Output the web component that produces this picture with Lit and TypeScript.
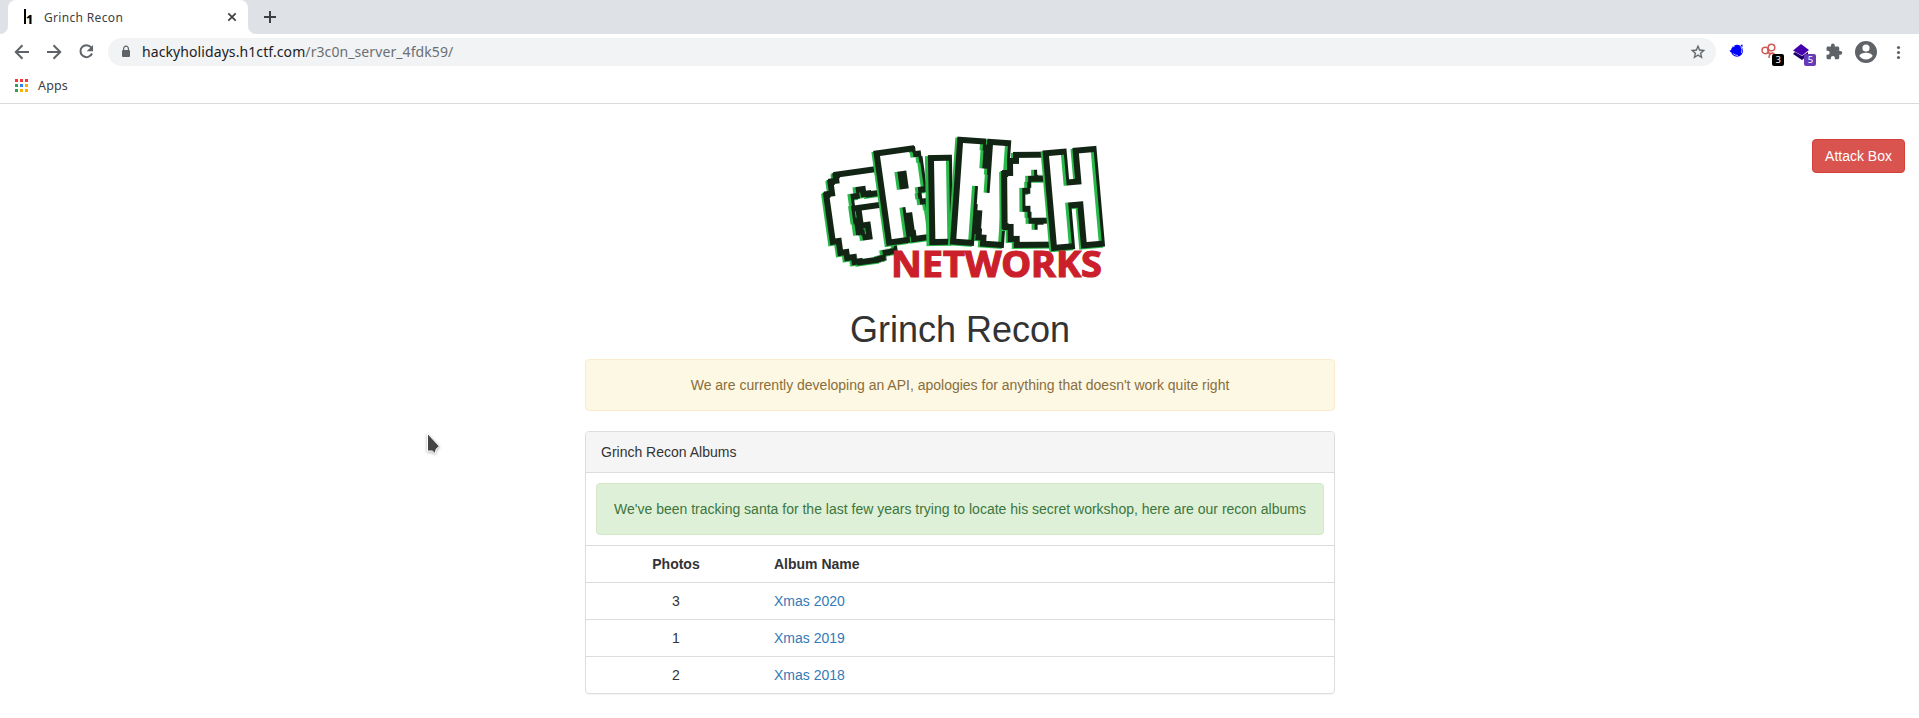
import { LitElement, html, svg, css } from "lit";
import { customElement, property } from "lit/decorators.js";

@customElement("browser-bar")
class BrowserBar extends LitElement {
  static styles = css`
    :host { display: block; font-family: "Noto Sans", sans-serif; color: #3c4043; }
    svg { display: block; flex: none; }
    .strip { display: flex; height: 34px; background: #dee1e6; }
    .curve { width: 8px; align-self: flex-end; height: 8px; background: radial-gradient(circle at 0 0, #dee1e6 7.5px, #fff 8.5px); }
    .curve.right { background: radial-gradient(circle at 100% 0, #dee1e6 7.5px, #fff 8.5px); }
    .tab { box-sizing: border-box; width: 240px; background: #fff; border-radius: 8px 8px 0 0; display: flex; align-items: center; padding: 0 10px 0 14px; font-size: 12px; line-height: 34px; }
    .title { flex: 1; margin-left: 6px; letter-spacing: 0.33px; padding-top: 1px; }
    .favicon { overflow: visible; }
    .plus { margin: 10px 0 0 7px; }
    .bar { box-sizing: border-box; height: 36px; padding: 4px 5px 4px 11px; display: flex; align-items: center; background: #fff; }
    .nav { display: flex; gap: 10px; width: 97px; }
    .pill { box-sizing: border-box; flex: none; width: 1608px; height: 28px; border-radius: 14px; background: #f1f3f4; display: flex; align-items: center; padding: 0 8px; font-size: 14px; }
    .lock { margin-right: 6px; }
    .url { flex: 1; color: #202124; line-height: 28px; letter-spacing: 0.09px; }
    .path { color: #6b6f73; }
    .exts { flex: 1; display: grid; grid-template-columns: repeat(6, 1fr); justify-items: center; align-items: center; margin-left: 5px; }
    .ext { position: relative; width: 22px; height: 28px; display: grid; place-items: start center; }
    .badge { position: absolute; right: -4px; bottom: 0; width: 12px; height: 12px; border-radius: 2px; background: #000; color: #fff; font-size: 9.5px; line-height: 12px; text-align: center; }
    .badge.violet { background: #673ab7; }
    .marks { display: flex; align-items: center; gap: 10px; height: 33px; padding-left: 15px; border-bottom: 1px solid #d8dadd; font-size: 12.5px; background: #fff; }
    .apps { line-height: 17px; margin-top: -2px; letter-spacing: 0.15px; }
    .grid { margin-top: -2px; }
  `;
  render() {
    const dots = ["#f13a35", "#f13a35", "#f13a35", "#34a053", "#2a86f4", "#f9ab00", "#34a053", "#fbb004", "#fbb004"];
    return html`
      <div class="strip">
        <div class="curve"></div>
        <div class="tab">
          <svg class="favicon" width="16" height="16" viewBox="0 0 16 16"><rect x="2" y="0" width="2" height="15" /><text x="4" y="14.800" font-family="Noto Sans" font-weight="800" font-size="12.500">1</text></svg>
          <span class="title">Grinch Recon</span>
          <svg width="12" height="12" viewBox="0 0 12 12"><path d="M2.3 2.3l7.4 7.4M9.7 2.3L2.3 9.7" stroke="#3c4043" stroke-width="1.7" /></svg>
        </div>
        <div class="curve right"></div>
        <svg class="plus" width="14" height="14" viewBox="0 0 14 14"><path d="M7 1v12M1 7h12" stroke="#3c4043" stroke-width="2" /></svg>
      </div>
      <div class="bar">
        <div class="nav">
          <svg width="22" height="22" viewBox="0 0 22 22" fill="none" stroke="#5f6368" stroke-width="2"><path d="M18 11H5.5M11.5 4.3L4.8 11l6.7 6.7" /></svg>
          <svg width="22" height="22" viewBox="0 0 22 22" fill="none" stroke="#5f6368" stroke-width="2"><path d="M4 11h12.5M10.5 4.3l6.7 6.7-6.7 6.7" /></svg>
          <svg width="22" height="22" viewBox="0 0 22 22"><path d="M16.1 6.3A6 6 0 1 0 17 12.5" fill="none" stroke="#5f6368" stroke-width="2" /><path d="M18 4v6.3h-6.3z" fill="#5f6368" /></svg>
        </div>
        <div class="pill">
          <svg class="lock" width="20" height="20" viewBox="0 0 20 20"><rect x="6" y="8" width="8" height="7" rx="1" fill="#5f6368" /><path d="M7.600 8V6.600a2.400 2.400 0 0 1 4.800 0V8" fill="none" stroke="#5f6368" stroke-width="1.200" /></svg>
          <span class="url">hackyholidays.h1ctf.com<span class="path">/r3c0n_server_4fdk59/</span></span>
          <svg width="20" height="20" viewBox="0 0 28 28"><path transform="translate(2 2)" fill="#5f6368" stroke="#5f6368" stroke-width=".3" d="M22 9.240l-7.190-.62L12 2 9.190 8.630 2 9.240l5.460 4.730L5.820 21 12 17.270 18.180 21l-1.630-7.030L22 9.240zM12 15.400l-3.760 2.270 1-4.280-3.320-2.880 4.380-.38L12 6.100l1.710 4.040 4.380.38-3.320 2.880 1 4.280L12 15.400z" /></svg>
        </div>
        <div class="exts">
          <div class="ext"><svg width="16" height="24" viewBox="0 0 16 24"><circle cx="8" cy="12.700" r="6" fill="#00f" /><path fill="#00f" d="M.5 12.300h3v2H1.500zM11.500 7l2-.5v3z" /><path d="M3.500 9l2.500-1.200M11.800 8.500q2.200 3 .5 6.500M4 15.500q2 2 5 2" stroke="#dfe4ff" fill="none" stroke-width=".8" /></svg></div>
          <div class="ext"><svg width="16" height="24" viewBox="0 0 16 24" fill="none" stroke="#cf5955" stroke-width="1.500"><circle cx="4.200" cy="12.500" r="3.200" /><circle cx="10.500" cy="9.500" r="3.300" /><path d="M6.500 10.500l1.500 5 4-.5 2.500 2M8 20q0-4 3-5" /></svg><span class="badge">3</span></div>
          <div class="ext"><svg width="16" height="24" viewBox="0 0 16 24"><path fill="#1e006e" d="M0 16l2-2 7 4 6-4v3l-6 5z" /><path fill="#4500ad" d="M8 6l8 6-7 5.500-9-5z" /></svg><span class="badge violet">5</span></div>
          <div class="ext"><svg width="18" height="28" viewBox="0 -6 24 37"><path fill="#5f6368" d="M20.500 11H19V7c0-1.100-.9-2-2-2h-4V3.500a2.500 2.500 0 0 0-5 0V5H4c-1.100 0-2 .9-2 2v3.800h1.500a2.700 2.700 0 0 1 0 5.400H2V20c0 1.100.9 2 2 2h3.800v-1.500a2.700 2.700 0 0 1 5.400 0V22H17c1.100 0 2-.9 2-2v-4h1.500a2.500 2.500 0 0 0 0-5z" /></svg></div>
          <svg width="22" height="22" viewBox="1 1 22 22"><path fill="#5f6368" d="M12 1a11 11 0 1 0 0 22 11 11 0 0 0 0-22zm0 3.400a3.600 3.600 0 1 1 0 7.200 3.600 3.600 0 0 1 0-7.200zM12 19.600a8 8 0 0 1-6.600-3.500c0-2.200 4.400-3.400 6.600-3.400s6.600 1.200 6.600 3.400A8 8 0 0 1 12 19.600z" /></svg>
          <svg width="22" height="22" viewBox="0 0 22 22" fill="#5f6368"><circle cx="11.500" cy="6.500" r="1.600" /><circle cx="11.500" cy="11.500" r="1.600" /><circle cx="11.500" cy="16.500" r="1.600" /></svg>
        </div>
      </div>
      <div class="marks">
        <svg class="grid" width="13" height="13" viewBox="0 0 13 13">${dots.map((c, i) => svg`<rect x=${(i % 3) * 5} y=${Math.floor(i / 3) * 5} width="3" height="3" fill=${c} />`)}</svg>
        <span class="apps">Apps</span>
      </div>`;
  }
}

interface Block { ch: string; x: number; y: number; w: number; h: number; rot: number; left: number; ink: number }

@customElement("grinch-logo")
class GrinchLogo extends LitElement {
  static styles = css`
    :host { display: block; }
    svg { display: block; overflow: visible; }
    .letter { font-family: "DejaVu Sans"; font-weight: 700; fill: #fff; }
    .networks { font-family: "Noto Sans", sans-serif; font-weight: 700; font-size: 36.5px; fill: #cb1f2b; stroke: #cb1f2b; stroke-width: 1.2px; }
  `;
  // left / ink: side bearing and drawn width of the glyph, in em
  blocks: Block[] = [
    { ch: "G", x: 827, y: 179, w: 52, h: 80, rot: -8, left: 0.05, ink: 0.697 },
    { ch: "R", x: 880, y: 156, w: 42, h: 86, rot: -8, left: 0.092, ink: 0.678 },
    { ch: "I", x: 934, y: 161, w: 14, h: 80, rot: -1, left: 0.092, ink: 0.188 },
    { ch: "N", x: 963, y: 143, w: 43, h: 94, rot: 4, left: 0.092, ink: 0.653 },
    { ch: "C", x: 1007, y: 158, w: 42, h: 84, rot: -0.5, left: 0.05, ink: 0.62 },
    { ch: "H", x: 1049, y: 156, w: 43, h: 87, rot: -5, left: 0.092, ink: 0.653 },
  ];
  render() {
    return html`<svg width="300" height="165" viewBox="810 120 300 165">
      <filter id="pix" filterUnits="userSpaceOnUse" primitiveUnits="userSpaceOnUse" x="-12" y="-12" width="84" height="132" color-interpolation-filters="sRGB">
        <feFlood x="-10" y="-10" width="2" height="2" flood-color="#fff" result="dot" />
        <feOffset in="dot" dx="0" dy="0" x="-12" y="-12" width="6" height="6" />
        <feTile x="-12" y="-12" width="84" height="132" result="grid" />
        <feComposite in="SourceGraphic" in2="grid" operator="in" />
        <feComponentTransfer><feFuncA type="linear" slope="12" intercept="-5" /></feComponentTransfer>
        <feMorphology operator="dilate" radius="2" result="white" />
        <feMorphology in="white" operator="dilate" radius="6" />
        <feColorMatrix values="0 0 0 0 .07 0 0 0 0 .14 0 0 0 0 .08 0 0 0 1 0" result="dark" />
        <feOffset in="dark" dx="-2.5" dy="1" />
        <feColorMatrix values="0 0 0 0 .16 0 0 0 0 .72 0 0 0 0 .29 0 0 0 1 0" result="green" />
        <feOffset in="white" dx="2.5" dy="0" />
        <feColorMatrix values="0 0 0 0 .16 0 0 0 0 .72 0 0 0 0 .29 0 0 0 1 0" result="edge" />
        <feMerge><feMergeNode in="green" /><feMergeNode in="dark" /><feMergeNode in="edge" /><feMergeNode in="white" /></feMerge>
      </filter>
      ${this.blocks.map((b) => {
        const size = b.h / 0.729;
        const sx = b.w / (b.ink * size);
        return svg`<g transform="translate(${b.x} ${b.y}) rotate(${b.rot})"><g filter="url(#pix)"><text class="letter" font-size=${size} transform="translate(${-b.left * size * sx} ${b.h}) scale(${sx} 1)">${b.ch}</text></g></g>`;
      })}
      <text class="networks" x="891" y="277" textLength="211" lengthAdjust="spacingAndGlyphs">NETWORKS</text>
    </svg>`;
  }
}

@customElement("app-root")
class AppRoot extends LitElement {
  @property({ attribute: false }) albums = [
    { photos: 3, name: "Xmas 2020" },
    { photos: 1, name: "Xmas 2019" },
    { photos: 2, name: "Xmas 2018" },
  ];
  static styles = css`
    :host { display: block; height: 718px; overflow: hidden; background: #fff; position: relative; font: 14px/20px "Liberation Sans", Arial, sans-serif; color: #333; }
    .page { display: grid; grid-template-columns: 585px 750px 1fr; }
    .main { grid-column: 2; padding-top: 16px; }
    grinch-logo { width: 300px; margin: 0 auto; }
    h1 { font-size: 36px; font-weight: 500; line-height: 39.6px; text-align: center; margin: 25px 0 9.400px; }
    .alert { box-sizing: border-box; height: 52px; padding: 15px; border: 1px solid #faebcc; border-radius: 4px; background: #fcf8e3; color: #8a6d3b; text-align: center; }
    .alert.ok { margin: 10px; border-color: #d6e9c6; background: #dff0d8; color: #3c763d; white-space: nowrap; }
    .panel { margin-top: 20px; border: 1px solid #ddd; border-radius: 4px; box-shadow: 0 1px 1px rgba(0, 0, 0, 0.05); }
    .heading { padding: 10px 15px; border-bottom: 1px solid #ddd; background: #f5f5f5; border-radius: 3px 3px 0 0; }
    .row { display: grid; grid-template-columns: 180px 1fr; border-top: 1px solid #ddd; }
    .row > * { padding: 8px; }
    .row > :first-child { text-align: center; }
    .head { font-weight: 700; }
    a { color: #337ab7; text-decoration: none; }
    .side { display: flex; justify-content: flex-end; align-items: flex-start; padding: 35px 14px 0 0; }
    .btn { font: inherit; box-sizing: border-box; height: 34px; padding: 6px 12px; border: 1px solid #d43f3a; border-radius: 4px; background: #d9534f; color: #fff; }
    .cursor { position: absolute; left: 423px; top: 430px; filter: drop-shadow(0 1px 1.500px rgba(0, 0, 0, 0.3)); }
  `;
  render() {
    return html`
      <browser-bar></browser-bar>
      <div class="page">
        <div class="main">
          <grinch-logo></grinch-logo>
          <h1>Grinch Recon</h1>
          <div class="alert">We are currently developing an API, apologies for anything that doesn't work quite right</div>
          <div class="panel">
            <div class="heading">Grinch Recon Albums</div>
            <div class="alert ok">We've been tracking santa for the last few years trying to locate his secret workshop, here are our recon albums</div>
            <div class="row head"><span>Photos</span><span>Album Name</span></div>
            ${this.albums.map((a) => html`<div class="row"><span>${a.photos}</span><a>${a.name}</a></div>`)}
          </div>
        </div>
        <div class="side"><button class="btn">Attack Box</button></div>
      </div>
      <svg class="cursor" width="20" height="28" viewBox="0 0 20 28"><path d="M4.500 3.500v17.500h4.800l3 2.700.8-4.500 3.200-3z" fill="#454545" stroke="#fff" stroke-width="1" /></svg>`;
  }
}
